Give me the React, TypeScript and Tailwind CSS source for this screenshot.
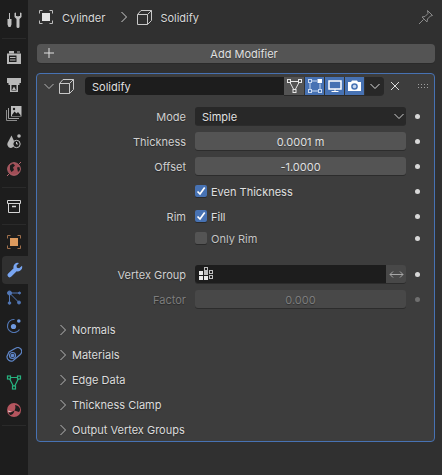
import React from "react";

const Chevron = ({ dir = "down", className = "" }: { dir?: "down" | "right"; className?: string }) => (
  <svg width="12" height="12" viewBox="0 0 12 12" fill="none" stroke="currentColor" strokeWidth="1" className={className}>
    {dir === "down" ? <path d="M1.500 4l4.500 4.500L10.500 4" /> : <path d="M3.500 1L8.500 6l-5 5" />}
  </svg>
);

const CubeIcon = () => (
  <svg width="15" height="15" viewBox="0 0 15 15" fill="none" stroke="#c8c8c8" strokeWidth="1">
    <path d="M.5 4.500h10v10H.5z" />
    <path d="M.5 4.500L4 .5h10.500v10l-4 4" />
    <path d="M10.500 4.500L14.500 .5" />
  </svg>
);

const Dot = ({ dim }: { dim?: boolean }) => (
  <div className={`w-[5px] h-[5px] rounded-full ${dim ? "bg-[#6f6f6f]" : "bg-[#d8d8d8]"}`} />
);

const Check = () => (
  <svg width="10" height="10" viewBox="0 0 10 10" fill="none" stroke="#fff" strokeWidth="1.700">
    <path d="M1.500 5.500L4 8l4.700-6.500" />
  </svg>
);

const Checkbox = ({ on, label, dim }: { on: boolean; label: string; dim?: boolean }) => (
  <div className="flex items-center gap-[4px] h-[18px]">
    <div className={`w-[12px] h-[12px] rounded-[2px] flex items-center justify-center shadow-[0_1px_0_#2a2a2a] ${on ? "bg-[#4772b3]" : "bg-[#545454]"}`}>
      {on && <Check />}
    </div>
    <span className={`pt-[2px] ${dim ? "text-[#c4c4c4]" : "text-[#e0e0e0]"}`}>{label}</span>
  </div>
);

const Row = ({ label, dim, dotDim, children, className = "" }: { label?: string; dim?: boolean; dotDim?: boolean; children: React.ReactNode; className?: string }) => (
  <div className={`flex items-center h-[18px] ${className}`}>
    <div className={`w-[149px] pt-[2px] text-right ${dim ? "text-[#7d7d7d]" : "text-[#d0d0d0]"}`}>{label}</div>
    <div className="ml-[9px] w-[211px]">{children}</div>
    <div className="ml-[9px]"><Dot dim={dotDim} /></div>
  </div>
);

const NumField = ({ value, dim }: { value: string; dim?: boolean }) => (
  <div className={`h-[18px] pt-[2px] rounded-[3px] flex items-center justify-center shadow-[0_1px_0_#2c2c2c] ${dim ? "bg-[#484848] text-[#7d7d7d]" : "bg-[#545454] text-[#e0e0e0]"}`}>
    {value}
  </div>
);

const SubPanel = ({ label }: { label: string }) => (
  <div className="flex items-center h-[25px] pl-[20px] text-[#dcdcdc]">
    <Chevron dir="right" className="text-[#b8b8b8]" />
    <span className="ml-[3px] pt-[2px]">{label}</span>
  </div>
);

const TabIcon = ({ active, children }: { active?: boolean; children: React.ReactNode }) => (
  <div className={`h-[28px] flex items-center justify-center ${active ? "bg-[#303030] rounded-l-[4px] ml-[2px] w-[26px]" : ""}`}>
    {children}
  </div>
);

const Sep = ({ h }: { h: string }) => (
  <div className={`flex items-center px-[2px] ${h}`}>
    <div className="h-[1px] w-full bg-[#2a2a2a]" />
  </div>
);

const Sidebar = () => (
  <div className="w-[28px] shrink-0 bg-[#1d1d1d] flex flex-col pt-[6px]">
    <TabIcon>
      <svg width="16" height="16" viewBox="0 0 16 16" fill="#c0c0c0">
        <path d="M3 1h1v6H3zM1.500 7h4v5.500L4.500 15h-2l-1-2.500z" />
        <path d="M8.500 1v4l2 2v7.500a1 1 0 0 0 3 0V7l2-2V1l-1.500-.5V4h-1l-1 .5-1-.5h-1V.5z" />
      </svg>
    </TabIcon>
    <Sep h="h-[9px]" />
    <TabIcon>
      <svg width="16" height="16" viewBox="0 0 16 16">
        <path d="M1 4.500h14v10.500H1z" fill="#b8b8b8" />
        <path d="M3 2h5v2.500H3zM11 2.500h3v1h-3z" fill="#b8b8b8" />
        <path d="M3 6.500h7.500v6.500H3z" fill="#1d1d1d" />
        <path d="M4 8h5.500v1H4zM4 10.500h5.500v1H4zM12 7h2v2h-2zM12 11h2v2h-2z" fill="#b8b8b8" />
      </svg>
    </TabIcon>
    <TabIcon>
      <svg width="16" height="16" viewBox="0 0 16 16">
        <path d="M1 1h14v5h-1.500v2H12v7H4V8H2.500V6H1z" fill="#b8b8b8" />
        <path d="M5.500 8h5v5.500h-5z" fill="#1d1d1d" />
        <path d="M6 13l2-3.500 2 3.500z" fill="#b8b8b8" />
      </svg>
    </TabIcon>
    <TabIcon>
      <svg width="16" height="16" viewBox="0 0 16 16">
        <path d="M.5 5v10.500H11" fill="none" stroke="#8c8c8c" />
        <path d="M2.500 3v10.500H13" fill="none" stroke="#a0a0a0" />
        <path d="M5 1h10.500v10.500H5z" fill="#bdbdbd" />
        <path d="M6 10l2.500-3.500 2 2 1.500-1.500 2.500 3v1H6z" fill="#1d1d1d" />
        <circle cx="8" cy="4" r="1.200" fill="#1d1d1d" />
      </svg>
    </TabIcon>
    <TabIcon>
      <svg width="16" height="16" viewBox="0 0 16 16">
        <path d="M5.500 2.500L1.500 10a3.500 3.500 0 0 0 5.500 4l1.500-5z" fill="#b8b8b8" />
        <circle cx="13" cy="3" r="1.800" fill="#b8b8b8" />
        <circle cx="10.500" cy="11" r="3.700" fill="#1d1d1d" stroke="#c4c4c4" />
        <path d="M10.500 9v2H12" stroke="#c4c4c4" fill="none" />
      </svg>
    </TabIcon>
    <TabIcon>
      <svg width="16" height="16" viewBox="0 0 16 16">
        <circle cx="8" cy="8" r="6.300" fill="#a14e57" stroke="#b4656d" />
        <path d="M4 4.500l3-2 2 2-2 2 1 2.500-2.500 2L4 8.500zM11 6.500l2.500-.5.500 3-2 2z" fill="#1d1d1d" />
        <path d="M1 15l2-2M13 3l2-2" stroke="#b4656d" />
      </svg>
    </TabIcon>
    <Sep h="h-[9px]" />
    <TabIcon>
      <svg width="16" height="16" viewBox="0 0 16 16" fill="none" stroke="#d4d4d4" strokeWidth="1">
        <path d="M1.500 2.500h13v3h-13zM2.500 5.500v9h11v-9" />
        <path d="M6 8.500h4" strokeWidth="1.500" />
      </svg>
    </TabIcon>
    <Sep h="h-[8px]" />
    <TabIcon>
      <svg width="16" height="16" viewBox="0 0 16 16" fill="none" stroke="#a0704c">
        <path d="M1.500 4.500v-3h3M11.500 1.500h3v3M14.500 11.500v3h-3M4.500 14.500h-3v-3" />
        <rect x="4" y="4" width="8" height="8" fill="#dd9a5e" stroke="none" />
      </svg>
    </TabIcon>
    <TabIcon active>
      <svg width="16" height="16" viewBox="0 0 16 16" fill="#79a6f2">
        <path d="M15 3.800L12.200 6.300 9.900 5.800 9.500 3.500 12 1A4.300 4.300 0 0 0 6.600 6.300L1.200 11.500a2.200 2.200 0 0 0 3.200 3.100l5.300-5.400A4.300 4.300 0 0 0 15 3.800z" />
      </svg>
    </TabIcon>
    <TabIcon>
      <svg width="16" height="16" viewBox="0 0 16 16" fill="#5277b5" stroke="#5277b5">
        <circle cx="3.500" cy="3" r="2" />
        <circle cx="3.500" cy="13" r="1.300" />
        <circle cx="13" cy="12.500" r="1.500" />
        <circle cx="13.500" cy="3" r="1" />
        <path d="M3.500 3v10M3.500 3L13 12.500M3.500 3h10" fill="none" />
      </svg>
    </TabIcon>
    <TabIcon>
      <svg width="16" height="16" viewBox="0 0 16 16" fill="none">
        <path d="M13.500 11.500A6.500 6.500 0 1 1 8.500 1.500" stroke="#5277b5" strokeWidth="1.200" />
        <circle cx="7.500" cy="8.500" r="2.600" fill="#6f9ae0" />
        <circle cx="12.800" cy="3" r="1.800" fill="#6f9ae0" />
      </svg>
    </TabIcon>
    <TabIcon>
      <svg width="16" height="16" viewBox="0 0 16 16" fill="none" stroke="#5f86c8" strokeWidth="1.200">
        <path d="M1 10.500a4.200 4.200 0 0 0 6 4.200l7-6a3.500 3.500 0 0 0-4.500-6.500L3 6z" />
        <circle cx="6.500" cy="9.500" r="3" />
        <circle cx="6.500" cy="9.500" r="1.200" fill="#5f86c8" />
      </svg>
    </TabIcon>
    <TabIcon>
      <svg width="16" height="16" viewBox="0 0 16 16" fill="none" stroke="#27b27f" strokeWidth="1.200">
        <path d="M3 3.500h10L8 13.500z" />
        <rect x="1.500" y="2" width="3" height="3" fill="#1d1d1d" />
        <rect x="11.500" y="2" width="3" height="3" fill="#1d1d1d" />
        <rect x="6.500" y="12" width="3" height="3" fill="#1d1d1d" />
      </svg>
    </TabIcon>
    <TabIcon>
      <svg width="16" height="16" viewBox="0 0 16 16">
        <circle cx="8" cy="8" r="7" fill="#b4555e" />
        <path d="M8.500 8.500c1-1.500 1.200-3.500.5-5.500 2.500.5 4.500 1.800 5 4 .2 1-.2 2-1 3z" fill="#1d1d1d" />
        <path d="M8.500 8.500c-.5 2.500-2 4.500-4.500 4.500L2.500 10.500c2 .2 4-.6 6-2z" fill="#1d1d1d" />
        <path d="M7 9L2.500 10.300 2 8.500c2 .8 3.500.8 5 .5z" fill="#e6c8ca" />
      </svg>
    </TabIcon>
    <Sep h="h-[2px]" />
  </div>
);

const Toggle = ({ children, active, gray }: { children: React.ReactNode; active?: boolean; gray?: boolean }) => (
  <div className={`h-[18px] flex items-center justify-center ${gray ? "w-[20px]" : "w-[19px]"} ${active ? "bg-[#4772b3]" : gray ? "bg-[#545454]" : "bg-[#282828]"}`}>
    {children}
  </div>
);

export default function App() {
  return (
    <div className="flex w-[442px] h-[475px] overflow-hidden bg-[#303030] text-[11px] leading-none font-['Inter','Noto_Sans',sans-serif] text-[#e0e0e0] [text-shadow:0_1px_1px_rgba(0,0,0,0.35)]">
      <Sidebar />
      <div className="flex-1 flex flex-col pl-[8px] pr-[7px] min-w-0">
        {/* breadcrumb */}
        <div className="flex items-center h-[34px] pl-[3px] text-[#d8d8d8]">
          <svg width="14" height="14" viewBox="0 0 14 14" fill="none" stroke="#bdbdbd" className="mr-[9px]">
            <path d="M.5 3.500v-3h3M10.500.5h3v3M13.500 10.500v3h-3M3.500 13.500h-3v-3" />
            <rect x="3" y="3" width="8" height="8" fill="#e4e4e4" stroke="none" />
          </svg>
          <span className="pt-[2px]">Cylinder</span>
          <Chevron dir="right" className="ml-[13px] mr-[7px] text-[#cfcfcf]" />
          <CubeIcon />
          <span className="ml-[8px] pt-[2px]">Solidify</span>
          <svg width="16" height="16" viewBox="0 0 16 16" fill="none" stroke="#8c8c8c" className="ml-auto mr-[1px]">
            <path d="M9.500 1.500l5 5-2 .5-3 3-.5 3-5-5 3-.5 3-3zM5.500 10.500L1 15" />
          </svg>
        </div>
        {/* add modifier */}
        <div className="relative mt-[10px] ml-[1px] h-[19px] pt-[2px] pl-[16px] rounded-[4px] bg-[#545454] flex items-center justify-center text-[#e0e0e0] shadow-[0_1px_0_#2a2a2a]">
          <svg width="10" height="10" viewBox="0 0 10 10" stroke="#e0e0e0" className="absolute left-[7px] top-[4px]">
            <path d="M5 0v10M0 5h10" />
          </svg>
          Add Modifier
        </div>
        {/* modifier panel */}
        <div className="mt-[10px] h-[369px] rounded-[4px] border border-[#4772b3] bg-[#3d3d3d]">
          <div className="flex items-center h-[18px] mt-[3px] pl-[6px]">
            <Chevron className="text-[#b4b4b4]" />
            <div className="ml-[4px]"><CubeIcon /></div>
            <div className="ml-[11px] w-[199px] h-[18px] pt-[2px] rounded-l-[4px] bg-[#1d1d1d] flex items-center pl-[7px] text-[#e0e0e0]">Solidify</div>
            <div className="flex rounded-r-[4px] overflow-hidden gap-[1px] h-[18px] w-[100px] bg-[#333333] shadow-[0_1px_0_#2a2a2a]">
              <Toggle gray>
                <svg width="15" height="14" viewBox="0 0 15 14" fill="none" stroke="#e8e8e8">
                  <path d="M2.500 2.500h10L7.500 12z" />
                  <rect x=".5" y=".5" width="3" height="3" fill="#545454" />
                  <rect x="11.500" y=".5" width="3" height="3" fill="#545454" />
                  <rect x="6" y="10.500" width="3" height="3" fill="#545454" />
                </svg>
              </Toggle>
              <Toggle active>
                <svg width="14" height="14" viewBox="0 0 14 14" fill="none" stroke="#c8d8f0">
                  <path d="M2 3.500v7M3.500 12h7M12 4.500v6M3.500 2H9" />
                  <rect x=".5" y=".5" width="3" height="3" />
                  <rect x=".5" y="10.500" width="3" height="3" />
                  <rect x="10.500" y="10.500" width="3" height="3" />
                  <rect x="9.500" y="0" width="4.500" height="4" fill="#fff" stroke="none" />
                </svg>
              </Toggle>
              <Toggle active>
                <svg width="14" height="14" viewBox="0 0 14 14" fill="none" stroke="#fff">
                  <rect x="1" y="2" width="12" height="8" strokeWidth="1.500" />
                  <path d="M7 10v2M3.500 12.500h7" />
                </svg>
              </Toggle>
              <Toggle active>
                <svg width="15" height="14" viewBox="0 0 15 14">
                  <path d="M1 3h3l1-1.500h5L11 3h3v9H1z" fill="#fff" />
                  <circle cx="7.500" cy="7.500" r="3.300" fill="#4772b3" />
                  <circle cx="7.500" cy="7.500" r="1.800" fill="#c8d8f0" />
                </svg>
              </Toggle>
              <div className="flex-1 bg-[#282828] flex items-center justify-center">
                <Chevron className="text-[#dcdcdc]" />
              </div>
            </div>
            <svg width="10" height="10" viewBox="0 0 10 10" stroke="#dcdcdc" className="ml-[6px]">
              <path d="M1 1l8 8M9 1l-8 8" />
            </svg>
            <div className="ml-[18px] grid grid-cols-4 gap-x-[2px] gap-y-[2px]">
              {Array.from({ length: 8 }).map((_, i) => (
                <div key={i} className="w-[1px] h-[1px] bg-[#a0a0a0]" />
              ))}
            </div>
          </div>
          <div className="mt-[12px] flex flex-col">
            <Row label="Mode">
              <div className="h-[18px] rounded-[3px] bg-[#282828] flex items-center pl-[7px] pr-[1px] text-[#e0e0e0] justify-between shadow-[0_1px_0_#2c2c2c]">
                <span className="pt-[2px]">Simple</span>
                <Chevron className="text-[#d0d0d0]" />
              </div>
            </Row>
            <Row label="Thickness" className="mt-[7px]"><NumField value="0.0001 m" /></Row>
            <Row label="Offset" className="mt-[7px]"><NumField value="-1.0000" /></Row>
            <Row className="mt-[7px]"><Checkbox on label="Even Thickness" /></Row>
            <Row label="Rim" className="mt-[7px]"><Checkbox on label="Fill" /></Row>
            <Row className="mt-[4px]"><Checkbox on={false} label="Only Rim" dim /></Row>
            <Row label="Vertex Group" className="mt-[18px]">
              <div className="flex h-[18px] rounded-[3px] overflow-hidden shadow-[0_1px_0_#2c2c2c]">
                <div className="w-[191px] bg-[#1d1d1d] flex items-center pl-[4px]">
                  <svg width="14" height="14" viewBox="0 0 14 14" fill="#e8e8e8">
                    <rect x="0" y="4" width="4" height="4" />
                    <rect x="0" y="9" width="4" height="4" />
                    <rect x="5" y="9" width="4" height="4" />
                    <rect x="5" y="4" width="4" height="4" fill="#bdbdbd" />
                    <rect x="5.500" y=".5" width="3" height="3" fill="none" stroke="#bdbdbd" />
                    <rect x="10.500" y="3.500" width="3" height="3" fill="none" stroke="#bdbdbd" />
                    <rect x="10.500" y="8.500" width="3" height="3" fill="none" stroke="#bdbdbd" />
                  </svg>
                </div>
                <div className="flex-1 bg-[#484848] flex items-center justify-center">
                  <svg width="15" height="9" viewBox="0 0 15 9" fill="none" stroke="#a6a6a6">
                    <path d="M1 4.500h13M4 1.500l-3 3 3 3M11 1.500l3 3-3 3" />
                  </svg>
                </div>
              </div>
            </Row>
            <Row label="Factor" dim dotDim className="mt-[7px]"><NumField value="0.000" dim /></Row>
          </div>
          <div className="mt-[9px] flex flex-col">
            <SubPanel label="Normals" />
            <SubPanel label="Materials" />
            <SubPanel label="Edge Data" />
            <SubPanel label="Thickness Clamp" />
            <SubPanel label="Output Vertex Groups" />
          </div>
        </div>
      </div>
    </div>
  );
}
